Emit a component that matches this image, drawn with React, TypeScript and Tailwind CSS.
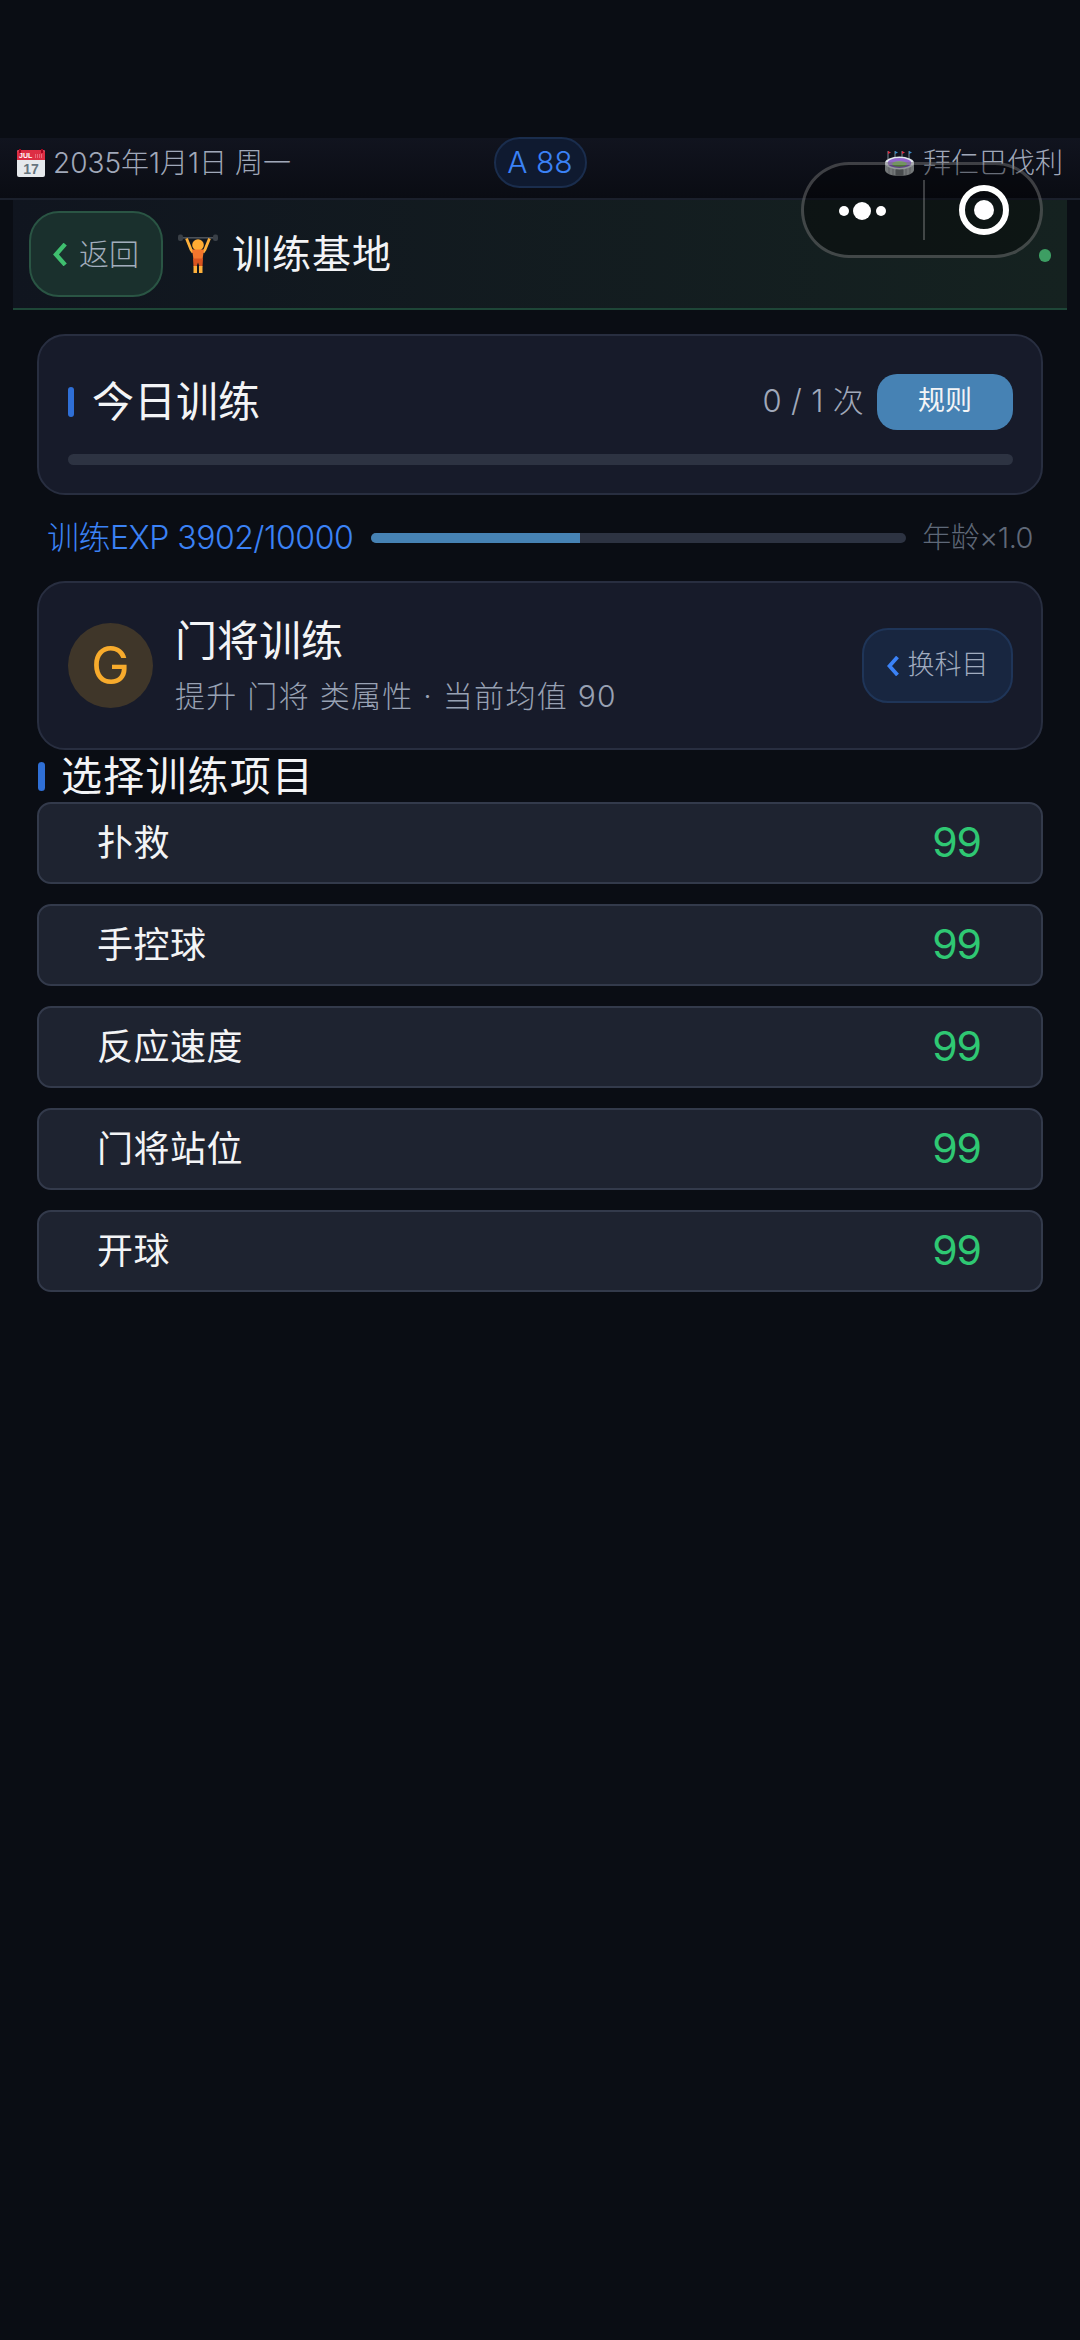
const font = '"Inter","Noto Sans CJK SC",sans-serif';

function Calendar() {
  return (
    <svg width="28" height="28" viewBox="0 0 28 28" className="shrink-0">
      <rect x="0" y="1" width="28" height="27" rx="2" fill="#e6e9ed" />
      <path d="M0 11V3a2 2 0 0 1 2-2h24a2 2 0 0 1 2 2v8z" fill="#dd2e44" />
      <rect x="2" y="0" width="2" height="4" fill="#a0041e" />
      <rect x="24" y="0" width="2" height="4" fill="#a0041e" />
      <text x="2" y="9" fontSize="7" fontWeight="700" fill="#fff" fontFamily="Liberation Sans">JUL</text>
      <path d="M18 6h8M18 8h8" stroke="#f4a6b2" strokeWidth="1" strokeDasharray="1 1" />
      <text x="14" y="25" textAnchor="middle" fontSize="14" fontWeight="700" fill="#66757f" fontFamily="Liberation Sans">17</text>
    </svg>
  );
}

function Lifter() {
  return (
    <svg width="40" height="40" viewBox="0 0 40 40" className="shrink-0">
      <rect x="3" y="3" width="34" height="1.600" fill="#4a5058" />
      <rect x="0" y="0.500" width="5" height="6.500" rx="2" fill="#3a4047" />
      <rect x="35" y="0.500" width="5" height="6.500" rx="2" fill="#3a4047" />
      <path d="M8.500 4.500 13 15.500l2 3M31.500 4.500 27 15.500l-2 3" stroke="#ffb13b" strokeWidth="2.800" fill="none" />
      <circle cx="20" cy="11" r="5.800" fill="#ffac33" />
      <path d="M14 15.500h12l-1.500 10h-9z" fill="#f4762d" />
      <path d="M15 24.500h10l-.5 8h-3l-1.500-4-1.500 4h-3z" fill="#d9541f" />
      <path d="M15.500 32h3.500v7h-3.500zM21 32h3.500v7H21z" fill="#ffb13b" />
    </svg>
  );
}

function Stadium() {
  return (
    <svg width="29" height="25" viewBox="0 0 29 25" className="shrink-0">
      <path d="M3 0v8M10 0v6M17 0v6M24 0v8" stroke="#99aab5" strokeWidth="0.800" />
      <path d="M3 0l3 1.500-3 1.500z" fill="#dd2e44" />
      <path d="M10 0l3 1.500-3 1.500z" fill="#3b88c3" />
      <path d="M17 0l3 1.500-3 1.500z" fill="#dd2e44" />
      <path d="M24 0l3 1.500-3 1.500z" fill="#3b88c3" />
      <path d="M0 12v7c0 3 6 6 14.500 6S29 22 29 19v-7z" fill="#b3b8bb" />
      <path d="M4 16v7M8 17v7M21 17v7M25 16v7" stroke="#8a8f92" strokeWidth="1" />
      <rect x="10.500" y="18" width="8" height="7" rx="1" fill="#6f7477" />
      <ellipse cx="14.500" cy="12" rx="14.500" ry="6.500" fill="#e1e8ed" />
      <ellipse cx="14.500" cy="12" rx="11.800" ry="5" fill="#9266cc" />
      <ellipse cx="14.500" cy="13" rx="7.500" ry="2.800" fill="#77b255" />
    </svg>
  );
}

function Chevron({ color, w, h }: { color: string; w: number; h: number }) {
  return (
    <svg width={w} height={h} viewBox="0 0 12 20" className="shrink-0">
      <path d="M10.500 1 2.500 10l8 9" fill="none" stroke={color} strokeWidth="3.800" />
    </svg>
  );
}

const skills = ["扑救", "手控球", "反应速度", "门将站位", "开球"];

export default function App() {
  return (
    <div
      className="relative w-[1080px] h-[2340px] overflow-hidden bg-[#0a0d14] pt-[138px] font-normal"
      style={{ fontFamily: font }}
    >
      {/* status strip */}
      <div className="h-[62px] border-b-2 border-[#1b202c] bg-gradient-to-b from-[#11141f] to-[#0a0c13] pl-[17px] pr-[17px] grid grid-cols-[1fr_auto_1fr] items-start font-light">
        <div className="flex items-center gap-[8px] h-[50px]">
          <Calendar />
          <span className="text-[28px] leading-none text-[#a0a8b9] whitespace-nowrap">2035年1月1日 周一</span>
        </div>
        <div className="h-[51px] w-[93px] -mt-px rounded-full border-2 border-[#1a2d4d] bg-[#0f1a30] flex items-center justify-center text-[30px] text-[#3b82f6]">
          A 88
        </div>
        <div className="flex items-center justify-end gap-[9px] h-[50px]">
          <Stadium />
          <span className="text-[28px] leading-none text-[#a0a8b9] whitespace-nowrap">拜仁巴伐利</span>
        </div>
      </div>

      {/* header */}
      <div className="relative mx-[13px] h-[110px] w-[1054px] border-b-2 border-[#1e4637] bg-gradient-to-r from-[#10151f] to-[#152220] pl-[16px] flex items-center gap-[15px]">
        <div className="w-[134px] h-[86px] rounded-[30px] border-2 border-[#2a5544] bg-[#1a302d] flex items-center justify-center gap-[12px]">
          <Chevron color="#3fbf6f" w={14} h={23} />
          <span className="text-[30px] font-light text-[#a2adbc]">返回</span>
        </div>
        <Lifter />
        <span className="text-[39px] text-[#f3f4f6] tracking-[1px] ml-[-1px]">训练基地</span>
        <span className="absolute left-[1026px] top-[49px] w-[12px] h-[13px] rounded-full bg-[#3d9e63]" />
      </div>

      <div className="px-[37px] pt-[24px]">
        {/* today card */}
        <div className="h-[161px] rounded-[28px] border-2 border-[#282e40] bg-[#171b2a] pl-[29px] pr-[28px] pt-[37px] flex flex-col">
          <div className="h-[57px] flex items-center">
            <span className="w-[6px] h-[30px] rounded-full bg-[#2f6fd6] mr-[18px]" />
            <span className="text-[42px] leading-none text-[#f3f4f6]">今日训练</span>
            <span className="ml-auto text-[31px] font-light tracking-[0.3px] text-[#a0a8b9] mr-[13px]">0 / 1 次</span>
            <span className="w-[136px] h-[56px] rounded-[20px] bg-[#4682b4] flex items-center justify-center text-[27px] text-[#f3f4f6]">
              规则
            </span>
          </div>
          <div className="mt-[24px] h-[11px] rounded-full bg-[#2d3342]" />
        </div>

        {/* exp */}
        <div className="h-[86px] flex items-center pl-[10px] pr-[10px] font-light">
          <span className="text-[32px] text-[#3b82f6] tracking-[-0.5px] whitespace-nowrap">训练EXP 3902/10000</span>
          <div className="ml-[18px] w-[535px] h-[10px] rounded-full bg-[#2d3342] overflow-hidden shrink-0">
            <div className="h-full w-[39%] bg-[#4682b4]" />
          </div>
          <span className="ml-auto text-[29px] text-[#5f6878] tracking-[-0.5px] whitespace-nowrap">年龄×1.0</span>
        </div>

        {/* subject card */}
        <div className="h-[169px] rounded-[28px] border-2 border-[#282e40] bg-[#171b2a] pl-[29px] pr-[28px] flex items-center">
          <div className="w-[85px] h-[85px] rounded-full bg-[#3f3629] flex items-center justify-center text-[52px] text-[#f7ab2c]">
            G
          </div>
          <div className="ml-[22px] flex flex-col">
            <span className="text-[42px] leading-[56px] text-[#f3f4f6] -mt-[3px]">门将训练</span>
            <span className="text-[30px] leading-[40px] mt-[7px] font-light tracking-[1.3px] text-[#98a1b3] whitespace-nowrap">提升 门将 类属性 · 当前均值 90</span>
          </div>
          <div className="ml-auto w-[151px] h-[75px] rounded-[26px] border-2 border-[#1f3558] bg-[#182640] flex items-center justify-center gap-[9px]">
            <Chevron color="#3b82f6" w={12} h={20} />
            <span className="text-[27px] font-light text-[#a0abbf]">换科目</span>
          </div>
        </div>

        {/* section title */}
        <div className="h-[52px] flex items-center">
          <span className="w-[7px] h-[29px] rounded-full bg-[#2f6fd6] ml-px mr-[16px]" />
          <span className="text-[41px] leading-none tracking-[1.2px] text-[#f3f4f6]">选择训练项目</span>
        </div>

        {/* rows */}
        <div className="flex flex-col gap-[20px]">
          {skills.map((s) => (
            <div
              key={s}
              className="h-[82px] rounded-[14px] border-2 border-[#333a4b] bg-[#1e2330] pl-[58px] pr-[60px] flex items-center justify-between"
            >
              <span className="text-[36px] text-[#f3f4f6] tracking-[0.5px]">{s}</span>
              <span className="text-[41px] font-normal tracking-[-1px] text-[#2fc873]">99</span>
            </div>
          ))}
        </div>
      </div>

      {/* WeChat capsule overlay */}
      <div className="absolute left-[801px] top-[162px] w-[242px] h-[96px] rounded-full border-[3px] border-[#ffffff38] bg-[#00000059]">
        <span className="absolute left-[35px] top-[41px] w-[10px] h-[10px] rounded-full bg-white" />
        <span className="absolute left-[49px] top-[37px] w-[18px] h-[18px] rounded-full bg-white" />
        <span className="absolute left-[72px] top-[41px] w-[10px] h-[10px] rounded-full bg-white" />
        <span className="absolute left-[119px] top-[15px] w-[2px] h-[60px] bg-[#ffffff38]" />
        <span className="absolute left-[155px] top-[20px] w-[50px] h-[50px] rounded-full border-[6px] border-white flex items-center justify-center">
          <span className="w-[20px] h-[20px] rounded-full bg-white" />
        </span>
      </div>
    </div>
  );
}
